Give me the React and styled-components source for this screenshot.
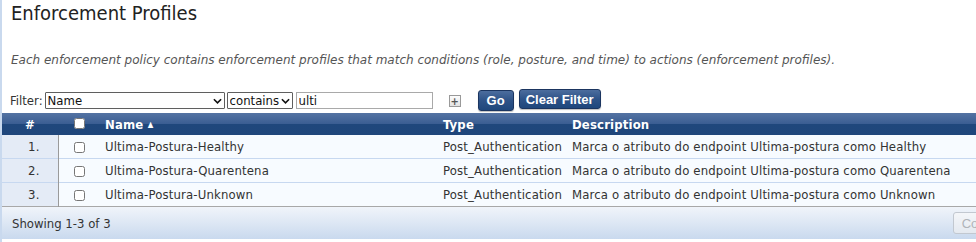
import styled, { createGlobalStyle } from "styled-components";

const GlobalStyle = createGlobalStyle`
  html, body {
    margin: 0;
    padding: 0;
    background: #fff;
    overflow: hidden;
  }
  body {
    font-family: "DejaVu Sans Condensed", "DejaVu Sans", sans-serif;
    color: #333;
  }
`;

const profiles = [
  { name: "Ultima-Postura-Healthy", type: "Post_Authentication", desc: "Marca o atributo do endpoint Ultima-postura como Healthy" },
  { name: "Ultima-Postura-Quarentena", type: "Post_Authentication", desc: "Marca o atributo do endpoint Ultima-postura como Quarentena" },
  { name: "Ultima-Postura-Unknown", type: "Post_Authentication", desc: "Marca o atributo do endpoint Ultima-postura como Unknown" },
];

const Page = () => {
  return (
    <Wrapper>
      <GlobalStyle />
      <Title>Enforcement Profiles</Title>
      <Intro>
        Each enforcement policy contains enforcement profiles that match conditions (role, posture, and
        time) to actions (enforcement profiles).
      </Intro>
      <FilterBar>
        <FilterLabel>Filter:</FilterLabel>
        <SelectBox $width={180}>
          <select defaultValue="Name">
            <option>Name</option>
            <option>Type</option>
            <option>Description</option>
          </select>
          <Chevron />
        </SelectBox>
        <SelectBox $width={66}>
          <select defaultValue="contains">
            <option>contains</option>
            <option>equals</option>
          </select>
          <Chevron />
        </SelectBox>
        <SearchInput defaultValue="ulti" spellCheck={false} />
        <PlusBox>+</PlusBox>
        <NavyButton $tall>Go</NavyButton>
        <NavyButton>Clear Filter</NavyButton>
      </FilterBar>
      <Grid>
        <colgroup>
          <col style={{ width: 56 }} />
          <col style={{ width: 42 }} />
          <col style={{ width: 338 }} />
          <col style={{ width: 129 }} />
          <col />
        </colgroup>
        <thead>
          <tr>
            <Th $center>#</Th>
            <Th $center>
              <input type="checkbox" />
            </Th>
            <Th>
              Name <SortMark>▲</SortMark>
            </Th>
            <Th>Type</Th>
            <Th>Description</Th>
          </tr>
        </thead>
        <tbody>
          {profiles.map((p, i) => (
            <Row key={p.name} $last={i === profiles.length - 1}>
              <IndexCell>{i + 1}.</IndexCell>
              <Td $center>
                <input type="checkbox" />
              </Td>
              <Td>{p.name}</Td>
              <Td>{p.type}</Td>
              <Td>{p.desc}</Td>
            </Row>
          ))}
        </tbody>
      </Grid>
      <Footer>
        <span>Showing 1-3 of 3</span>
        <GhostButton disabled>Copy</GhostButton>
      </Footer>
    </Wrapper>
  );
};

const Chevron = () => (
  <ChevronIcon viewBox="0 0 10 6" width="9" height="6">
    <path d="M1 1 L5 5 L9 1" fill="none" stroke="#111" strokeWidth="1.8" />
  </ChevronIcon>
);

const Wrapper = styled.div`
  width: 1009px;
  min-height: 242px;
  border-left: 2px solid #c9d9ee;
  box-sizing: border-box;
`;

const Title = styled.h1`
  margin: 0;
  padding: 1px 0 0 9px;
  font-size: 20px;
  font-weight: normal;
  line-height: 24px;
  color: #222;
`;

const Intro = styled.p`
  margin: 27px 0 0;
  padding-left: 9px;
  font-family: "DejaVu Sans", sans-serif;
  font-size: 12px;
  font-style: italic;
  line-height: 16px;
  color: #555;
  white-space: nowrap;
`;

const FilterBar = styled.div`
  display: flex;
  align-items: center;
  height: 22px;
  margin-top: 21px;
  padding-left: 8px;
  font-size: 13px;
  color: #333;
`;

const FilterLabel = styled.span`
  margin-right: 2px;
`;

const SelectBox = styled.label`
  position: relative;
  display: inline-block;
  width: ${(p) => p.$width}px;
  height: 17px;
  margin-right: 2px;
  select {
    appearance: none;
    width: 100%;
    height: 17px;
    box-sizing: border-box;
    border: 1px solid #5f5f5f;
    border-radius: 1px;
    padding: 0 12px 0 2px;
    font-family: inherit;
    font-size: 13px;
    line-height: 15px;
    color: #111;
    background: #fff;
  }
`;

const ChevronIcon = styled.svg`
  position: absolute;
  right: 3px;
  top: 6px;
  pointer-events: none;
`;

const SearchInput = styled.input`
  width: 137px;
  height: 17px;
  box-sizing: border-box;
  margin-left: 1px;
  border: 1px solid #a9a9a9;
  padding: 0 2px;
  font-family: inherit;
  font-size: 13px;
  color: #111;
  outline: none;
`;

const PlusBox = styled.span`
  display: inline-flex;
  align-items: center;
  justify-content: center;
  width: 10px;
  height: 10px;
  margin: 2px 17px 0 16px;
  border: 1px solid #999;
  background: linear-gradient(#fdfdfd, #e2e2e2);
  font-size: 11px;
  font-weight: bold;
  line-height: 1;
  color: #555;
`;

const NavyButton = styled.button`
  height: ${(p) => (p.$tall ? 21 : 20)}px;
  margin: ${(p) => (p.$tall ? "1px 5px 0 0" : "-2px 0 0 0")};
  padding: 0 ${(p) => (p.$tall ? 8 : 6)}px;
  border: 1px solid #1b3560;
  border-radius: 3px;
  background: linear-gradient(#4c6d9e 0%, #2e5388 50%, #1f477c 100%);
  font-family: "Liberation Sans", Arial, sans-serif;
  font-size: 13px;
  font-weight: bold;
  color: #fff;
  box-shadow: 0 1px 1px rgba(0, 0, 0, 0.25);
`;

const Grid = styled.table`
  width: 100%;
  margin-top: 2px;
  border-collapse: collapse;
  table-layout: fixed;
  font-size: 13px;
  letter-spacing: 0.15px;
  input[type="checkbox"] {
    width: 11px;
    height: 11px;
    margin: 0;
    vertical-align: middle;
  }
`;

const Th = styled.th`
  height: 22px;
  padding: 0 5px;
  text-align: ${(p) => (p.$center ? "center" : "left")};
  font-weight: bold;
  color: #fff;
  background: linear-gradient(#5473a3 0%, #3b5e93 48%, #1f477c 52%, #1f467b 100%);
  white-space: nowrap;
  input[type="checkbox"] {
    margin-top: -4px;
  }
`;

const SortMark = styled.span`
  font-size: 8px;
  vertical-align: 2px;
`;

const Row = styled.tr`
  background: #f7fbff;
  border-bottom: 1px solid ${(p) => (p.$last ? "#a8a8a8" : "#c7d8f0")};
`;

const Td = styled.td`
  height: 23px;
  padding: 0 5px;
  text-align: ${(p) => (p.$center ? "center" : "left")};
  color: #333;
  white-space: nowrap;
  overflow: hidden;
`;

const IndexCell = styled(Td)`
  text-align: right;
  padding-right: 18px;
  background: #e4ebf6;
  border-right: 1px solid #9a9a9a;
`;

const Footer = styled.div`
  display: flex;
  align-items: center;
  justify-content: space-between;
  height: 32px;
  padding: 0 8px 0 10px;
  background: linear-gradient(#f0f4fa 0%, #dde7f4 50%, #c9d9ee 100%);
  font-size: 13px;
  color: #333;
`;

const GhostButton = styled.button`
  height: 22px;
  padding: 0 8px;
  border: 1px solid #c2c8d0;
  border-radius: 3px;
  background: linear-gradient(#f4f6f9, #e4e9f0);
  font-family: "Liberation Sans", Arial, sans-serif;
  font-size: 13px;
  color: #b0b4b9;
`;

export default Page;
